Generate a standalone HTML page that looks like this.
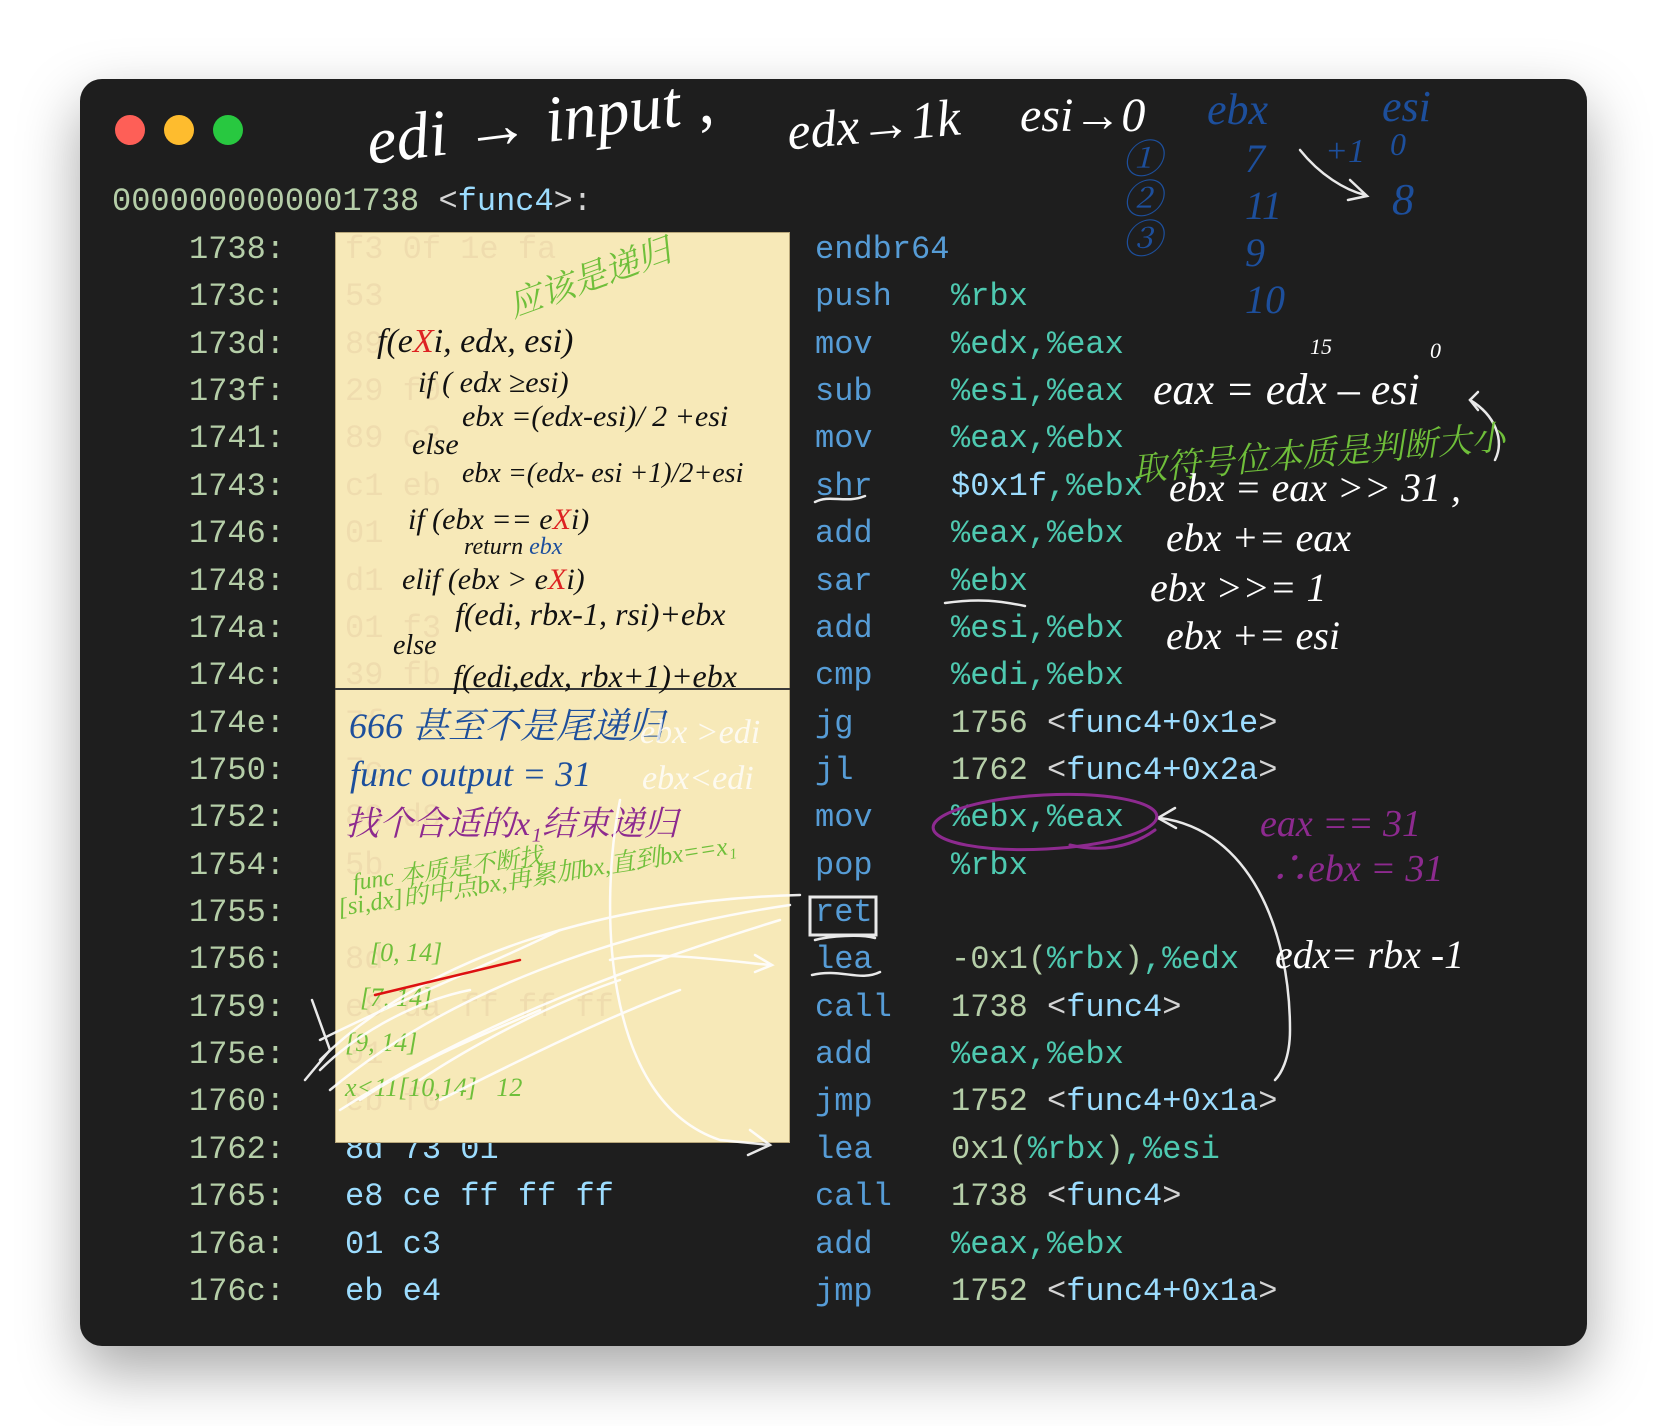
<!DOCTYPE html>
<html><head><meta charset="utf-8"><style>
*{margin:0;padding:0;box-sizing:border-box}
html,body{width:1667px;height:1426px;background:#fff;overflow:hidden}
.win{position:absolute;left:80px;top:79px;width:1507px;height:1267px;background:#1e1e1e;border-radius:22px;box-shadow:0 25px 60px rgba(0,0,0,.35)}
.dot{position:absolute;top:115px;width:30px;height:30px;border-radius:50%}
.m{position:absolute;font-family:"Liberation Mono","DejaVu Sans Mono",monospace;font-size:32px;line-height:47.36px;white-space:pre}
.a{color:#b5cea8}.b{color:#9cdcfe}.k{color:#569cd6}.r{color:#4ec9b0}.g{color:#d4d4d4}
.note{position:absolute;left:335px;top:232px;width:455px;height:911px;background:#f7e9b8;border:1px solid #b8a77a}
.h{position:absolute;font-family:"Liberation Serif","Noto Serif CJK SC",serif;font-style:italic;white-space:nowrap;line-height:1}
.w{color:#fff}.bl{color:#1d4f9c}.gr{color:#6fbf3a}.pu{color:#8d2a8f}.bk{color:#111}
</style></head><body>
<div class="win"></div>
<div class="dot" style="left:115px;background:#fe5f57"></div>
<div class="dot" style="left:164px;background:#febc2e"></div>
<div class="dot" style="left:213px;background:#28c840"></div>
<div class="m" style="left:112px;top:178px"><span class="a">0000000000001738</span> <span class="g">&lt;</span><span class="b">func4</span><span class="g">&gt;:</span></div>

<div class="m a" style="left:185px;top:226px;text-align:right;width:100px">1738:
173c:
173d:
173f:
1741:
1743:
1746:
1748:
174a:
174c:
174e:
1750:
1752:
1754:
1755:
1756:
1759:
175e:
1760:
1762:
1765:
176a:
176c:</div>
<div class="m b" style="left:345px;top:226px">f3 0f 1e fa
53
89 d0
29 f0
89 c3
c1 eb 1f
01 c3
d1 fb
01 f3
39 fb
7f 0c
7c 10
89 d8
5b
c3
8d 53 ff
e8 da ff ff ff
01 c3
eb f0
8d 73 01
e8 ce ff ff ff
01 c3
eb e4</div>
<div class="m k" style="left:815px;top:226px">endbr64
push
mov
sub
mov
shr
add
sar
add
cmp
jg
jl
mov
pop
ret
lea
call
add
jmp
lea
call
add
jmp</div>
<div class="m r" style="left:951px;top:226px">
%rbx
%edx,%eax
%esi,%eax
%eax,%ebx
<span class="b">$0x1f</span>,%ebx
%eax,%ebx
%ebx
%esi,%ebx
%edi,%ebx
<span class="a">1756</span> <span class="g">&lt;</span><span class="b">func4+0x1e</span><span class="g">&gt;</span>
<span class="a">1762</span> <span class="g">&lt;</span><span class="b">func4+0x2a</span><span class="g">&gt;</span>
%ebx,%eax
%rbx

<span class="a">-0x1(</span>%rbx<span class="a">)</span>,%edx
<span class="a">1738</span> <span class="g">&lt;</span><span class="b">func4</span><span class="g">&gt;</span>
%eax,%ebx
<span class="a">1752</span> <span class="g">&lt;</span><span class="b">func4+0x1a</span><span class="g">&gt;</span>
<span class="a">0x1(</span>%rbx<span class="a">)</span>,%esi
<span class="a">1738</span> <span class="g">&lt;</span><span class="b">func4</span><span class="g">&gt;</span>
%eax,%ebx
<span class="a">1752</span> <span class="g">&lt;</span><span class="b">func4+0x1a</span><span class="g">&gt;</span></div>

<div class="note"></div>
<div style="position:absolute;left:335px;top:688px;width:455px;height:2px;background:#3a3a3a"></div>
<div class="m" style="left:345px;top:226px;color:#efdcae;">f3 0f 1e fa
53
89
29 f0
89 c3
c1 eb
01
d1
01 f3
39 fb
7f
7c
89 d8
5b

8d
e8 da ff ff ff
01
eb f0</div>

<!-- note handwriting -->
<div class="h gr" style="left:505px;top:262px;font-size:34px;transform:rotate(-20deg)">应该是递归</div>
<div class="h bk" style="left:377px;top:325px;font-size:34px">f(e<span style="color:#d22">X</span>i, edx, esi)</div>
<div class="h bk" style="left:418px;top:368px;font-size:30px">if ( edx ≥esi)</div>
<div class="h bk" style="left:462px;top:402px;font-size:30px">ebx =(edx-esi)/ 2 +esi</div>
<div class="h bk" style="left:412px;top:430px;font-size:30px">else</div>
<div class="h bk" style="left:462px;top:460px;font-size:28px">ebx =(edx- esi +1)/2+esi</div>
<div class="h bk" style="left:408px;top:505px;font-size:30px">if (ebx == e<span style="color:#d22">X</span>i)</div>
<div class="h bk" style="left:464px;top:535px;font-size:24px">return <span class="bl">ebx</span></div>
<div class="h bk" style="left:402px;top:565px;font-size:30px">elif (ebx &gt; e<span style="color:#d22">X</span>i)</div>
<div class="h bk" style="left:455px;top:598px;font-size:32px">f(edi, rbx-1, rsi)+ebx</div>
<div class="h bk" style="left:393px;top:632px;font-size:28px">else</div>
<div class="h bk" style="left:453px;top:660px;font-size:32px">f(edi,edx, rbx+1)+ebx</div>
<div class="h bl" style="left:349px;top:708px;font-size:36px">666 甚至不是尾递归</div>
<div class="h bl" style="left:350px;top:756px;font-size:36px">func output = 31</div>
<div class="h pu" style="left:345px;top:808px;font-size:34px">找个合适的x₁结束递归</div>
<div class="h gr" style="left:352px;top:858px;font-size:24px;transform:rotate(-8deg)">func 本质是不断找</div>
<div class="h gr" style="left:338px;top:896px;font-size:25px;transform:rotate(-9deg);transform-origin:left center">[si,dx]的中点bx,再累加bx,直到bx==x₁</div>
<div class="h gr" style="left:370px;top:940px;font-size:26px">[0, 14]</div>
<div class="h gr" style="left:360px;top:985px;font-size:26px">[7, 14]</div>
<div class="h gr" style="left:345px;top:1030px;font-size:26px">[9, 14]</div>
<div class="h gr" style="left:345px;top:1075px;font-size:26px">x&lt;11[10,14]  &nbsp; 12</div>
<div class="h w" style="left:640px;top:716px;font-size:34px;opacity:.8">ebx &gt;edi</div>
<div class="h w" style="left:642px;top:762px;font-size:34px;opacity:.8">ebx&lt;edi</div>

<svg width="1667" height="1426" style="position:absolute;left:0;top:0" fill="none" stroke-linecap="round">
<g stroke="#fff" stroke-width="2.5" opacity=".9">
<path d="M320 1060 C420 960 600 900 800 895"/><path d="M330 1090 C450 990 620 930 790 905"/>
<path d="M340 1110 C480 1020 650 960 780 920"/><path d="M320 1040 C400 1000 500 960 560 930"/>
<path d="M320 1070 C360 1030 420 1000 470 990"/><path d="M420 1080 C480 1040 560 1000 620 980"/>
<path d="M440 1100 C520 1060 600 1020 680 990"/><path d="M360 1100 C420 1060 470 1040 540 1010"/>
<path d="M312 1000 L330 1050 L305 1080"/>
<path d="M620 800 C600 900 600 1100 720 1140 L770 1145"/><path d="M750 1130 L770 1145 L748 1155"/>
<path d="M610 960 C650 950 720 960 770 965"/><path d="M755 955 L772 965 L755 972"/>
<path d="M1160 818 C1250 830 1290 930 1290 1030 C1290 1060 1280 1075 1275 1080"/><path d="M1175 808 L1158 818 L1176 828"/>
<rect x="810" y="897" width="66" height="38" stroke-width="3"/>
<path d="M815 940 C830 936 860 934 875 938"/>
<path d="M815 502 C830 494 845 504 865 496"/>
<path d="M945 603 C980 598 1000 601 1025 606"/>
<path d="M812 975 C840 968 860 982 880 972"/>
<path d="M1470 400 C1495 415 1505 440 1495 460"/><path d="M1478 392 L1470 400 L1478 410"/>
<path d="M1300 150 C1320 175 1345 190 1365 195"/><path d="M1350 180 L1367 196 L1348 200"/>
</g>
<path d="M375 995 L520 960" stroke="#d11" stroke-width="2.5"/>
<ellipse cx="1045" cy="822" rx="112" ry="27" stroke="#8d2a8f" stroke-width="3" transform="rotate(-3 1045 822)"/>
<path d="M1070 845 C1100 852 1130 848 1155 830" stroke="#8d2a8f" stroke-width="3"/>
</svg>

<!-- top/right annotations -->
<div class="h w" style="left:367px;top:110px;font-size:66px;transform:rotate(-7deg);transform-origin:left">edi → input ,</div>
<div class="h w" style="left:787px;top:100px;font-size:52px;transform:rotate(-5deg)">edx→1k</div>
<div class="h w" style="left:1020px;top:92px;font-size:48px">esi→0</div>
<div class="h bl" style="left:1207px;top:88px;font-size:44px">ebx</div>
<div class="h bl" style="left:1382px;top:85px;font-size:44px">esi</div>
<div class="h bl" style="left:1122px;top:140px;font-size:40px">①<br>②<br>③</div>
<div class="h bl" style="left:1245px;top:135px;font-size:40px;line-height:47px">7<br>11<br>9<br>10</div>
<div class="h bl" style="left:1325px;top:135px;font-size:34px">+1</div>
<div class="h bl" style="left:1390px;top:128px;font-size:32px">0</div>
<div class="h bl" style="left:1392px;top:178px;font-size:44px">8</div>
<div class="h w" style="left:1310px;top:336px;font-size:22px">15</div>
<div class="h w" style="left:1430px;top:340px;font-size:22px">0</div>
<div class="h w" style="left:1153px;top:368px;font-size:44px">eax = edx – esi</div>
<div class="h gr" style="left:1132px;top:438px;font-size:34px;transform:rotate(-5deg)">取符号位本质是判断大小</div>
<div class="h w" style="left:1169px;top:468px;font-size:40px">ebx = eax &gt;&gt; 31 ,</div>
<div class="h w" style="left:1166px;top:518px;font-size:40px">ebx += eax</div>
<div class="h w" style="left:1150px;top:568px;font-size:40px">ebx &gt;&gt;= 1</div>
<div class="h w" style="left:1166px;top:616px;font-size:40px">ebx += esi</div>
<div class="h pu" style="left:1260px;top:805px;font-size:38px">eax == 31</div>
<div class="h pu" style="left:1270px;top:850px;font-size:38px">∴ebx = 31</div>
<div class="h w" style="left:1275px;top:935px;font-size:40px">edx= rbx -1</div>
</body></html>
